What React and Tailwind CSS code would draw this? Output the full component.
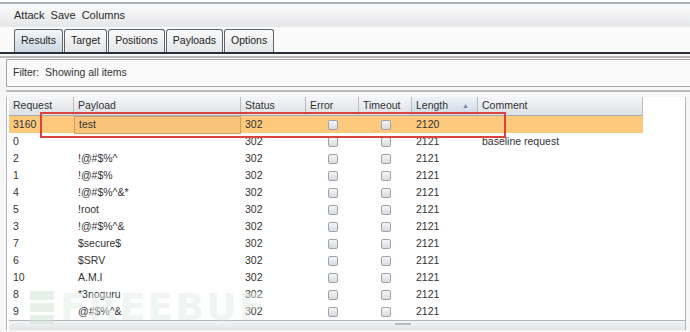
import React from 'react';

const rows = [
  ['0', '', 'baseline request'],
  ['2', '!@#$%^', ''],
  ['1', '!@#$%', ''],
  ['4', '!@#$%^&*', ''],
  ['5', '!root', ''],
  ['3', '!@#$%^&', ''],
  ['7', '$secure$', ''],
  ['6', '$SRV', ''],
  ['10', 'A.M.I', ''],
  ['8', '*3noguru', ''],
  ['9', '@#$%^&', ''],
];

const cols = 'grid grid-cols-[65px_167px_65px_53px_53px_66px_165px]';

function Box() {
  return (
    <span className="block h-[10px] w-[10px] rounded-[2px] border border-[#9da3aa] bg-gradient-to-b from-[#f4f5f6] to-[#d9dce0]" />
  );
}

function Tab({ label, active }) {
  return (
    <div
      className={
        'flex h-[23px] items-center rounded-t-[3px] border border-b-0 border-[#5b636b] px-[6px] ' +
        (active
          ? 'bg-gradient-to-b from-[#f4f7fa] to-[#c9d7e3]'
          : 'bg-gradient-to-b from-[#fbfbfb] to-[#e4e6e8]')
      }
    >
      {label}
    </div>
  );
}

export default function App() {
  return (
    <div className="relative h-[332px] w-[690px] overflow-hidden bg-[#f6f6f6] font-['Liberation_Sans',Arial,sans-serif] text-[10.5px] text-[#333]">
      <div className="h-[2px] bg-white" />
      <div className="h-[2px] bg-[#a9b0b8]" />
      <div className="flex h-[23px] items-center bg-gradient-to-b from-[#fafafa] to-[#e6e7e9] pl-[14px] text-[11px] text-[#2b2b2b]">
        <span>Attack</span>
        <span className="ml-[6px]">Save</span>
        <span className="ml-[6px]">Columns</span>
      </div>

      <div className="flex h-[25px] items-end gap-[1px] bg-[#fafafa] pl-[14px] text-[10.5px] text-[#222]">
        <Tab label="Results" active />
        <Tab label="Target" />
        <Tab label="Positions" />
        <Tab label="Payloads" />
        <Tab label="Options" />
      </div>
      <div className="h-[2px] bg-[#27303b]" />
      <div className="h-[2px] bg-[#f5f5f5]" />
      <div className="h-[2px] bg-[#b7b9bc]" />

      <div className="ml-[6px] mt-[1px] flex h-[28px] items-center border border-r-0 border-[#a6a8ab] bg-[#fafafa] pl-[6px] text-[#333]">
        Filter:&nbsp; Showing all items
      </div>

      <div className="ml-[6px] mt-[3px] h-[2px] bg-[#b9bbbe]" />

      <div className="ml-[6px] mt-[5px] mr-[4px] border-l border-r border-[#b5b7ba] bg-white pl-[2px]">
        <div className={cols + ' h-[19px] w-[634px] border-b border-[#a9adb2] bg-gradient-to-b from-[#f5f6f8] to-[#dde0e4]'}>
          {['Request', 'Payload', 'Status', 'Error', 'Timeout', 'Length', 'Comment'].map((h, i) => (
            <div
              key={h}
              className={
                'flex items-center border-r border-[#b8bcc1] pl-[4px] ' +
                (i === 5 ? 'justify-between bg-gradient-to-b from-[#eef3f8] to-[#cdd9e5] pr-[8px]' : '')
              }
            >
              {h}
              {i === 5 && <span className="text-[7px] text-[#6f8aa5]">▲</span>}
            </div>
          ))}
        </div>

        <div className={cols + ' h-[17px] w-[634px] bg-[#fdc97c]'}>
          <div className="flex items-center pl-[4px]">3160</div>
          <div className="flex items-center border border-[#c9a46a] bg-[#f8c47b] pl-[4px]">test</div>
          <div className="flex items-center pl-[4px]">302</div>
          <div className="flex items-center justify-center"><Box /></div>
          <div className="flex items-center justify-center"><Box /></div>
          <div className="flex items-center pl-[4px]">2120</div>
          <div />
        </div>

        {rows.map(([req, pay, com]) => (
          <div key={req} className={cols + ' h-[17px] w-[634px]'}>
            <div className="flex items-center pl-[4px]">{req}</div>
            <div className="flex items-center pl-[4px]">{pay}</div>
            <div className="flex items-center pl-[4px]">302</div>
            <div className="flex items-center justify-center"><Box /></div>
            <div className="flex items-center justify-center"><Box /></div>
            <div className="flex items-center pl-[4px]">2121</div>
            <div className="flex items-center pl-[4px]">{com}</div>
          </div>
        ))}

        <div className="relative h-[10px] border-t border-[#b3b6ba] bg-gradient-to-b from-[#f3f4f5] to-[#e2e4e6]">
          <div className="absolute left-[386px] top-[2px] h-[2px] w-[16px] bg-[#b8bcc0]" />
        </div>
      </div>

      <div className="absolute left-[40px] top-[112px] h-[26px] w-[466px] border-2 border-[#d8423f]" />

      <div className="pointer-events-none absolute left-[30px] top-[288px] flex items-center gap-[6px] font-['DejaVu_Sans',sans-serif] text-[38px] font-bold leading-none tracking-[2px] text-[#e3ece6] opacity-50">
        <span className="flex flex-col gap-[3px]">
          <span className="block h-[9px] w-[24px] bg-[#cfe2d5]" />
          <span className="block h-[9px] w-[24px] bg-[#cfe2d5]" />
          <span className="block h-[9px] w-[24px] bg-[#cfe2d5]" />
        </span>
        <span>FREEBUF</span>
      </div>
    </div>
  );
}
